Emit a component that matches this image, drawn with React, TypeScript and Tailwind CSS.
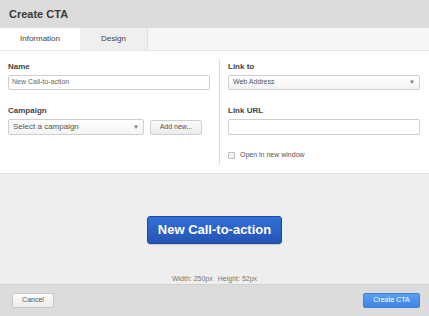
export default function App() {
  return (
    <div className="w-[429px] h-[316px] flex flex-col bg-white text-[#333] overflow-hidden" style={{ fontFamily: '"Liberation Sans", Arial, sans-serif' }}>
      {/* Header */}
      <div className="shrink-0 h-[28px] bg-[#dcdcdc] flex items-center px-[9px]">
        <h1 className="text-[11px] font-bold text-[#3a3a3a]">Create CTA</h1>
      </div>

      {/* Tabs */}
      <div className="shrink-0 h-[23px] bg-[#f6f6f6] border-b border-[#e6e6e6] flex">
        <div className="w-[80px] bg-white flex items-center justify-center text-[8px] text-[#444]">Information</div>
        <div className="w-[68px] bg-[#efefef] border-r border-[#e0e0e0] flex items-center justify-center text-[8px] text-[#444]">Design</div>
      </div>

      {/* Form */}
      <div className="shrink-0 h-[123px] flex border-b border-[#e2e2e2]">
        <div className="w-[219px] pl-[8px] pr-[9px] pt-[11px]">
          <label className="block text-[8px] font-bold text-[#444] leading-[10px]">Name</label>
          <div className="mt-[3px] h-[15px] w-[202px] border border-[#cfcfcf] rounded-[2px] flex items-center px-[3px] text-[7px] text-[#666]">
            New Call-to-action
          </div>
          <label className="block mt-[16px] text-[8px] font-bold text-[#444] leading-[10px]">Campaign</label>
          <div className="mt-[3px] flex items-center gap-[6px]">
            <div className="h-[16px] w-[136px] border border-[#cfcfcf] rounded-[2px] bg-gradient-to-b from-white to-[#f3f3f3] flex items-center justify-between px-[4px] text-[8px] text-[#555]">
              <span>Select a campaign</span>
              <span className="text-[6px] text-[#777]">▼</span>
            </div>
            <button className="h-[15px] w-[52px] border border-[#cfcfcf] rounded-[2px] bg-gradient-to-b from-[#fbfbfb] to-[#ececec] text-[7px] text-[#555]">
              Add new...
            </button>
          </div>
        </div>
        <div className="my-[8px] w-px bg-[#dcdcdc] h-[106px]" />
        <div className="flex-1 pl-[8px] pr-[9px] pt-[11px]">
          <label className="block text-[8px] font-bold text-[#444] leading-[10px]">Link to</label>
          <div className="mt-[3px] h-[15px] w-[192px] border border-[#cfcfcf] rounded-[2px] bg-gradient-to-b from-white to-[#f3f3f3] flex items-center justify-between px-[4px] text-[7px] text-[#555]">
            <span>Web Address</span>
            <span className="text-[6px] text-[#777]">▼</span>
          </div>
          <label className="block mt-[16px] text-[8px] font-bold text-[#444] leading-[10px]">Link URL</label>
          <div className="mt-[3px] h-[16px] w-[192px] border border-[#cfcfcf] rounded-[2px]" />
          <div className="mt-[15px] flex items-center gap-[5px]">
            <span className="w-[7px] h-[7px] border border-[#bdbdbd] rounded-[1px] bg-[#f4f4f4]" />
            <span className="text-[7px] text-[#555]">Open in new window</span>
          </div>
        </div>
      </div>

      {/* Preview */}
      <div className="flex-1 min-h-0 bg-[#eeeeee] flex flex-col items-center">
        <button className="mt-[42px] w-[135px] h-[28px] rounded-[3px] border border-[#1e4a9e] bg-gradient-to-b from-[#3470d6] to-[#2454b6] text-white text-[13px] font-bold shadow-[0_1px_1px_rgba(0,0,0,0.15)]">
          New Call-to-action
        </button>
        <div className="mt-[30px] flex gap-[5px] text-[7px] leading-[10px] text-[#777]">
          <span>Width: 250px</span>
          <span>Height: 52px</span>
        </div>
      </div>

      {/* Footer */}
      <div className="shrink-0 h-[32px] bg-[#dcdcdc] border-t border-[#d2d2d2] flex items-center justify-between px-[12px]">
        <button className="w-[42px] h-[15px] border border-[#c9c9c9] rounded-[2px] bg-gradient-to-b from-[#fbfbfb] to-[#ececec] text-[7px] text-[#555]">
          Cancel
        </button>
        <button className="mr-[-3px] w-[57px] h-[15px] border border-[#3e7fdc] rounded-[2px] bg-gradient-to-b from-[#5ca0f2] to-[#3f83e4] text-[7px] text-white">
          Create CTA
        </button>
      </div>
    </div>
  )
}
